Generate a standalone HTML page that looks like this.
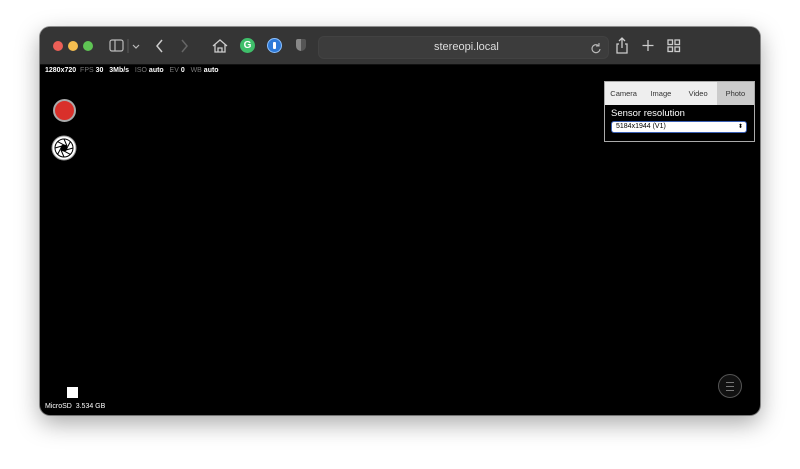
<!DOCTYPE html>
<html><head><style>
body{margin:0;width:800px;height:469px;background:#fff;position:relative;overflow:hidden;font-family:"Liberation Sans",sans-serif}
.win{position:absolute;left:40px;top:27px;width:720px;height:388px;border-radius:10px;background:#000;overflow:hidden;box-shadow:0 8px 24px rgba(0,0,0,.35),0 0 0 1px rgba(0,0,0,.4)}
.tb{position:absolute;left:0;top:0;width:720px;height:37px;background:#353535;border-bottom:1px solid #111}
.dot{position:absolute;top:14px;width:10px;height:10px;border-radius:50%}
.url{position:absolute;left:278px;top:9px;width:289px;height:21px;background:#3c3c3c;border-radius:6px;border:1px solid #424242}
.url span{position:absolute;left:115px;top:4px;color:#ddd;font-size:11px}
.st{position:absolute;left:5px;top:40px;font-size:7px;color:#fff;font-weight:bold;white-space:pre}
.st i{font-style:normal;color:#777;font-weight:normal}
.panel{position:absolute;left:564px;top:54px;width:149px;height:59px;border:1px solid #aaa;background:#000}
.tabs{height:23px;background:#eee;display:flex;font-size:7.5px;color:#333}
.tabs div{flex:1;text-align:center;line-height:23px}
.sel{position:absolute;left:6px;top:39px;height:10px;border:1.5px solid #3a5fb5;border-radius:3px;background:#fff;font-size:7px;line-height:10px;padding-left:4px;width:130px}
</style></head><body>
<div class="win">
<div class="tb">
<div class="dot" style="left:13px;background:#ec5f57"></div>
<div class="dot" style="left:28px;background:#f4bd4f"></div>
<div class="dot" style="left:43px;background:#5fc454"></div>
<svg style="position:absolute;left:68px;top:10px" width="40" height="18" fill="none" stroke="#bbb" stroke-width="1.2"><rect x="2" y="3" width="13" height="11" rx="2"/><line x1="7" y1="3" x2="7" y2="14"/><line x1="20" y1="2" x2="20" y2="16" stroke="#555"/><path d="M25 8l3 3 3-3"/></svg>
<svg style="position:absolute;left:112px;top:10px" width="40" height="18" fill="none" stroke-width="1.5"><path d="M10 3l-5 6 5 6" stroke="#ccc"/><path d="M30 3l5 6-5 6" stroke="#666"/></svg>
<svg style="position:absolute;left:170px;top:10px" width="20" height="18" fill="none" stroke="#ccc" stroke-width="1.3"><path d="M3 9l7-6 7 6M5 7v8h10V7M8 15v-4h4v4"/></svg>
<div style="position:absolute;left:200px;top:11px;width:15px;height:15px;border-radius:50%;background:#3fbf6a;color:#fff;font-size:10px;font-weight:bold;text-align:center;line-height:15px">G</div>
<div style="position:absolute;left:227px;top:11px;width:13px;height:13px;border-radius:50%;background:#2e7ad8;border:1px solid #8cc0ff"><div style="position:absolute;left:5px;top:3px;width:3px;height:7px;background:#fff;border-radius:1px"></div></div>
<div style="position:absolute;left:256px;top:12px;width:10px;height:12px;border-radius:2px 2px 5px 5px;background:linear-gradient(90deg,#888 50%,#555 50%)"></div>
<div class="url"><span>stereopi.local</span>
<svg style="position:absolute;left:271px;top:5px" width="12" height="12" fill="none" stroke="#bbb" stroke-width="1.1"><path d="M9 4a4 4 0 1 0 1 3M9 1v3H6"/></svg></div>
<svg style="position:absolute;left:575px;top:9px" width="70" height="20" fill="none" stroke="#ccc" stroke-width="1.3"><path d="M4 8H2v9h10V8h-2M7 12V2M4 5l3-3 3 3"/><path d="M33 4v11M27.5 9.5h11"/><rect x="53" y="4" width="4.5" height="4.5"/><rect x="60" y="4" width="4.5" height="4.5"/><rect x="53" y="11" width="4.5" height="4.5"/><rect x="60" y="11" width="4.5" height="4.5"/></svg>
</div>
<div class="st">1280x720  <i>FPS</i> 30   3Mb/s   <i>ISO</i> auto   <i>EV</i> 0   <i>WB</i> auto</div>
<div style="position:absolute;left:13px;top:72px;width:19px;height:19px;border-radius:50%;background:#d9302a;border:2px solid #aaa"></div>
<svg style="position:absolute;left:11px;top:108px" width="26" height="26"><circle cx="13" cy="13" r="12" fill="#fff" stroke="#999"/><circle cx="13" cy="13" r="9" fill="none" stroke="#000" stroke-width="1"/><g stroke="#000" stroke-width="1"><path d="M13 4l3 7M22 13l-7 2M13 22l-3-7M4 13l7-2M19.4 6.6l-3.5 6.5M19.4 19.4l-6.5-3.5M6.6 19.4l3.5-6.5M6.6 6.6l6.5 3.5"/></g><circle cx="13" cy="13" r="3.5" fill="#000"/></svg>
<div style="position:absolute;left:27px;top:360px;width:11px;height:11px;background:#fff"></div>
<div style="position:absolute;left:5px;top:376px;color:#fff;font-size:7px">MicroSD &nbsp;3.534 GB</div>
<div style="position:absolute;left:678px;top:347px;width:22px;height:22px;border-radius:50%;border:1.5px solid #555;background:#111"><div style="position:absolute;left:7px;top:7px;width:8px;height:7px;border-top:1px solid #777;border-bottom:1px solid #777"></div><div style="position:absolute;left:7px;top:10.5px;width:8px;height:1px;background:#777"></div></div>
<div class="panel"><div class="tabs"><div>Camera</div><div>Image</div><div>Video</div><div style="background:#ccc">Photo</div></div>
<div style="position:absolute;left:6px;top:26px;color:#fff;font-size:9.5px">Sensor resolution</div>
<div class="sel">5184x1944 (V1)<span style="position:absolute;right:3px;font-size:6px">⬍</span></div></div>
</div>
</body></html>
